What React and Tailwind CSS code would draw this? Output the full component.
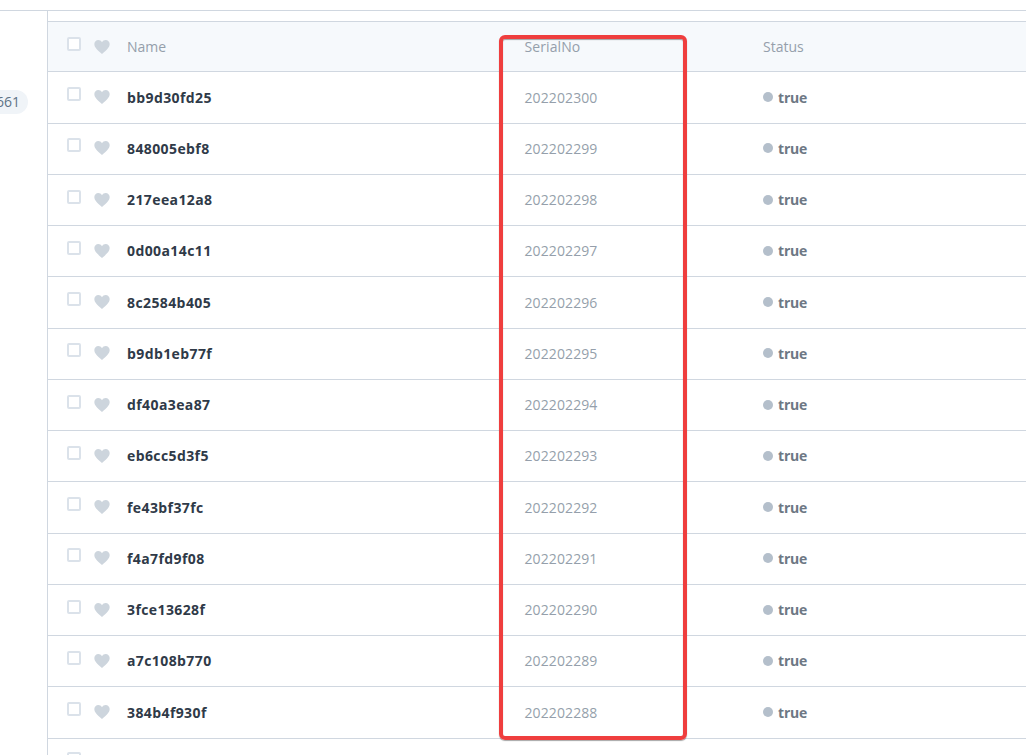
const rows = [
    ['bb9d30fd25', '202202300'],
    ['848005ebf8', '202202299'],
    ['217eea12a8', '202202298'],
    ['0d00a14c11', '202202297'],
    ['8c2584b405', '202202296'],
    ['b9db1eb77f', '202202295'],
    ['df40a3ea87', '202202294'],
    ['eb6cc5d3f5', '202202293'],
    ['fe43bf37fc', '202202292'],
    ['f4a7fd9f08', '202202291'],
    ['3fce13628f', '202202290'],
    ['a7c108b770', '202202289'],
    ['384b4f930f', '202202288'],
];

function Heart() {
    return (
        <svg className="w-4 h-4 shrink-0 fill-[#cdd5dd]" viewBox="0 0 24 24">
            <path d="M12 22.5C5 16.5 0.5 12.8 0.5 7.6 0.5 4 3.2 1.5 6.5 1.5c2.200 0 4.200 1.100 5.500 3.200 1.300-2.100 3.300-3.200 5.500-3.200 3.300 0 6 2.500 6 6.100 0 5.200-4.500 8.900-11.500 14.900z" />
        </svg>
    );
}

function Checkbox() {
    return <span className="block w-[14px] h-[14px] rounded-[2px] border-2 border-[#dbe2ea] bg-white" />;
}

function Row({ name, serial }) {
    return (
        <div className="flex items-center h-[51.25px] pb-[0.5px] border-b border-[#d0d7e0] box-border text-[14px]">
            <div className="w-[79px] pl-[19px] flex items-center gap-[13px] shrink-0">
                <div className="-mt-[6px]"><Checkbox /></div>
                <Heart />
            </div>
            <div className="w-[397px] shrink-0 font-bold tracking-[0.4px] text-[#2f3a48]">{name}</div>
            <div className="w-[239px] shrink-0 pl-[0.5px] tracking-[0.1px] text-[#959fab]">{serial}</div>
            <div className="flex items-center gap-[5px] font-bold tracking-[-0.2px] text-[#6d7884]">
                <span className="w-[10px] h-[10px] rounded-full bg-[#b4bfcb]" />
                true
            </div>
        </div>
    );
}

export default function App() {
    return (
        <div className="relative w-[1026px] h-[755px] overflow-hidden bg-white font-['Open_Sans',sans-serif]">
            <div className="h-[11px] border-b border-[#d0d7e0]" />
            <div className="flex">
                <div className="w-[47px] shrink-0 overflow-hidden pt-[79px]">
                    <div className="h-6 w-[50px] -ml-[22px] pb-[2px] rounded-full bg-[#f0f4f8] flex items-center pl-[18px] text-[14px] text-[#5d7286]">
                        661
                    </div>
                </div>
                <div className="flex-1 border-l border-[#d0d7e0] pt-[10px] min-w-0">
                    <div className="flex items-center h-[51.3px] border-y border-[#d0d7e0] box-border bg-[#f6f9fc] text-[14px] text-[#959fab]">
                        <div className="w-[79px] pl-[19px] flex items-center gap-[13px] shrink-0">
                            <div className="-mt-[6px]"><Checkbox /></div>
                            <Heart />
                        </div>
                        <div className="w-[397px] shrink-0">Name</div>
                        <div className="w-[239px] shrink-0 -mt-[1px] pl-[0.5px] tracking-[0.1px]">SerialNo</div>
                        <div>Status</div>
                    </div>
                    {rows.map(([name, serial]) => (
                        <Row key={serial} name={name} serial={serial} />
                    ))}
                    <div className="pl-[19px] pt-[13px]"><Checkbox /></div>
                </div>
            </div>
            <div className="absolute left-[499px] top-[35px] w-[188px] h-[705px] border-4 border-[#ef3e3e] rounded-[6px] shadow-[0_1px_1px_rgba(0,0,0,0.35),inset_0_1px_1px_rgba(0,0,0,0.35)]" />
        </div>
    );
}
